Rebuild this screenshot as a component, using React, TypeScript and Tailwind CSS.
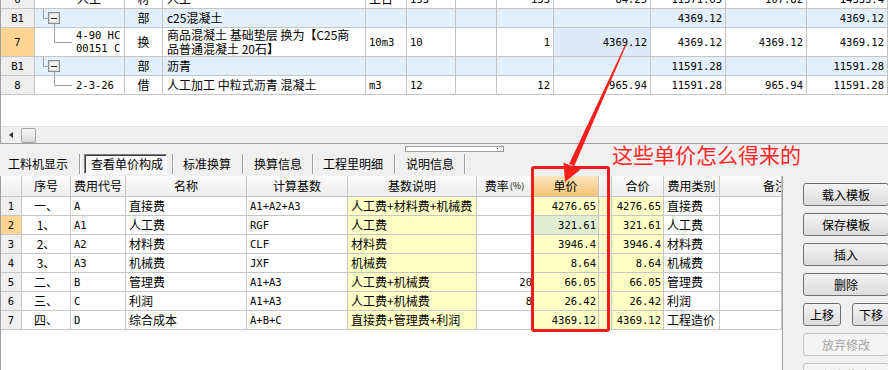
import React from 'react';

const CJK = "font-['Noto_Sans_CJK_SC','Noto_Sans',sans-serif]";
const MONO = "font-['DejaVu_Sans_Mono','Noto_Sans_CJK_SC',monospace] text-[10.5px]";

// upper grid: 定额列表
const TOP_GRID = 'grid grid-cols-[34px_90px_38px_203px_41px_49px_41px_57px_97px_75px_81px_81px]';
const TL = 'border-r border-b border-[#c4c4c4] overflow-hidden whitespace-nowrap flex items-center leading-[14px]';

// lower grid: 单价构成
const FEE_GRID = 'grid grid-cols-[21px_49px_55px_121px_101px_129px_56px_66px_13px_52px_56px_62px]';
const BL = 'border-r border-b border-[#c6c6c6] overflow-hidden whitespace-nowrap flex items-center leading-[14px]';

const FEES = [
  ['1', '一、', 'A', '直接费', 'A1+A2+A3', '人工费+材料费+机械费', '', '4276.65', '4276.65', '直接费'],
  ['2', '1、', 'A1', '人工费', 'RGF', '人工费', '', '321.61', '321.61', '人工费'],
  ['3', '2、', 'A2', '材料费', 'CLF', '材料费', '', '3946.4', '3946.4', '材料费'],
  ['4', '3、', 'A3', '机械费', 'JXF', '机械费', '', '8.64', '8.64', '机械费'],
  ['5', '二、', 'B', '管理费', 'A1+A3', '人工费+机械费', '20', '66.05', '66.05', '管理费'],
  ['6', '三、', 'C', '利润', 'A1+A3', '人工费+机械费', '8', '26.42', '26.42', '利润'],
  ['7', '四、', 'D', '综合成本', 'A+B+C', '直接费+管理费+利润', '', '4369.12', '4369.12', '工程造价'],
];

function C({ children, className = '' }: { children?: React.ReactNode; className?: string }) {
  return <div className={`${TL} ${className}`}>{children}</div>;
}

function B({ children, className = '' }: { children?: React.ReactNode; className?: string }) {
  return <div className={`${BL} ${className}`}>{children}</div>;
}

function Tree({ group, h }: { group?: boolean; h: number }) {
  const mid = Math.floor(h / 2) + 0.5;
  if (group)
    return (
      <svg width="30" height={h} className="shrink-0">
        <path d={`M8.5 0V${mid}H13`} stroke="#a0a0a0" fill="none" />
        <rect x="13.5" y="3.5" width="11" height="11" fill="#f2f2f2" stroke="#8c8c8c" />
        <rect x="14.5" y="4.5" width="9" height="9" fill="none" stroke="#d8d8d8" />
        <path d="M16 9.5h6" stroke="#222" />
        <path d={`M19.5 15V${h}`} stroke="#a0a0a0" />
      </svg>
    );
  return (
    <svg width="38" height={h} className="shrink-0">
      <path d={`M19.5 0V${mid}H37`} stroke="#a0a0a0" fill="none" />
    </svg>
  );
}

function Num({ v, className = '' }: { v: string; className?: string }) {
  return <C className={`justify-end pr-[3px] ${MONO} ${className}`}>{v}</C>;
}

function TopPanel() {
  const blue = 'bg-[#e1f0fb]';
  return (
    <div className="h-[144px] flex flex-col bg-white border-l border-b border-[#a0a0a0]">
      <div className="flex-1 overflow-hidden">
        <div className={`${TOP_GRID} h-[19px] -mt-[10px]`}>
          <C className={`justify-center bg-[#efefef] ${MONO}`}>6</C>
          <C className="pl-[42px]">人工</C>
          <C className="justify-center">材</C>
          <C className="pl-[4px]">人工</C>
          <C className="pl-[3px]">工日</C>
          <C className={`pl-[3px] ${MONO}`}>133</C>
          <C />
          <Num v="133" />
          <Num v="84.25" />
          <Num v="11371.65" />
          <Num v="107.82" />
          <Num v="14333.4" />
        </div>
        <div className={`${TOP_GRID} h-[19px] ${blue}`}>
          <C className={`justify-center bg-[#efefef] ${MONO}`}>B1</C>
          <C className="items-stretch"><Tree group h={18} /></C>
          <C className="justify-center">部</C>
          <C className="pl-[4px]">c25混凝土</C>
          <C /><C /><C /><C /><C />
          <Num v="4369.12" />
          <C />
          <Num v="4369.12" />
        </div>
        <div className={`${TOP_GRID} h-[29px]`}>
          <C className={`justify-center bg-[#ffd591] ${MONO}`}>7</C>
          <C className="items-stretch">
            <Tree h={28} />
            <div className={`ml-[3px] self-center leading-[13px] ${MONO}`}>4-90 HC<br />00151 C</div>
          </C>
          <C className="justify-center">换</C>
          <C className="pl-[4px]">
            <div className="leading-[14px]">商品混凝土 基础垫层 换为【C25商<br />品普通混凝土 20石】</div>
          </C>
          <C className={`pl-[3px] ${MONO}`}>10m3</C>
          <C className={`pl-[3px] ${MONO}`}>10</C>
          <C />
          <Num v="1" />
          <Num v="4369.12" className="bg-[#dceaf9]" />
          <Num v="4369.12" />
          <Num v="4369.12" />
          <Num v="4369.12" />
        </div>
        <div className={`${TOP_GRID} h-[19px] ${blue}`}>
          <C className={`justify-center bg-[#efefef] ${MONO}`}>B1</C>
          <C className="items-stretch"><Tree group h={18} /></C>
          <C className="justify-center">部</C>
          <C className="pl-[4px]">沥青</C>
          <C /><C /><C /><C /><C />
          <Num v="11591.28" />
          <C />
          <Num v="11591.28" />
        </div>
        <div className={`${TOP_GRID} h-[19px]`}>
          <C className={`justify-center bg-[#efefef] ${MONO}`}>8</C>
          <C className="items-stretch">
            <Tree h={18} />
            <div className={`ml-[3px] self-center ${MONO}`}>2-3-26</div>
          </C>
          <C className="justify-center">借</C>
          <C className="pl-[4px]">人工加工 中粒式沥青 混凝土</C>
          <C className={`pl-[3px] ${MONO}`}>m3</C>
          <C className={`pl-[3px] ${MONO}`}>12</C>
          <C />
          <Num v="12" />
          <Num v="965.94" />
          <Num v="11591.28" />
          <Num v="965.94" />
          <Num v="11591.28" />
        </div>
      </div>
      {/* horizontal scrollbar */}
      <div className="h-[17px] flex items-center bg-[#efefef] border-t border-[#e2e2e2]">
        <svg width="4" height="6" className="ml-[8px]">
          <polygon points="4,0 0,3 4,6" fill="#303030" />
        </svg>
        <div className="ml-[8px] w-[15px] h-[15px] border border-[#a6a6a6] rounded-[2px] bg-gradient-to-b from-[#f6f6f6] to-[#dadada]" />
      </div>
    </div>
  );
}

function Sep() {
  return <div className="w-[2px] h-[20px] border-l border-[#a0a0a0] border-r border-r-white shrink-0" />;
}

function TabBar() {
  return (
    <div className="h-[32px] flex flex-col">
      <div className="h-[8px] pt-[2px]">
        <div className="ml-[405px] w-[99px] h-[6px] border border-[#9c9c9c] bg-white relative">
          <div className="absolute right-[5px] top-[1px] w-[1px] h-[1px] bg-[#202020]" />
        </div>
      </div>
      <div className="flex items-center h-[21px] mt-[1px] text-[12px]">
        <div className="w-[79px] pl-[8px]">工料机显示</div>
        <Sep />
        <div className="w-[91px] pl-[3px]">
          <div className="w-[83px] h-[20px] pl-[6px] flex items-center bg-[#f8f8f8] border border-t-[#7c7c7c] border-l-[#7c7c7c] border-r-white border-b-white shadow-[inset_1px_1px_0_#3c3c3c]">
            查看单价构成
          </div>
        </div>
        <Sep />
        <div className="w-[68px] pl-[9px]">标准换算</div>
        <Sep />
        <div className="w-[68px] pl-[10px]">换算信息</div>
        <Sep />
        <div className="w-[80px] pl-[9px]">工程里明细</div>
        <Sep />
        <div className="w-[68px] pl-[10px]">说明信息</div>
        <Sep />
      </div>
    </div>
  );
}

function FeeTable() {
  const yellow = 'bg-[#ffffc6]';
  return (
    <div className="w-[783px] bg-white border-l border-r border-[#a0a0a0] text-[12px]">
      <div className={`${FEE_GRID} h-[21px] bg-gradient-to-b from-[#fbfbfb] to-[#ededed]`}>
        <B />
        <B className="justify-center">序号</B>
        <B className="justify-center">费用代号</B>
        <B className="justify-center">名称</B>
        <B className="justify-center">计算基数</B>
        <B className="justify-center">基数说明</B>
        <B className="justify-center">费率<span className="text-[9px] ml-[1px]">(%)</span></B>
        <B className="justify-center bg-gradient-to-b from-[#fde6bd] to-[#f2c276]">单价</B>
        <B />
        <B className="justify-center">合价</B>
        <B className="justify-center">费用类别</B>
        <B className="justify-end"><span className="mr-[-6px]">备注</span></B>
      </div>
      {FEES.map((r) => (
        <div key={r[0]} className={`${FEE_GRID} h-[19px]`}>
          <B className={`justify-center ${MONO} ${r[0] === '2' ? 'bg-[#ffd591]' : 'bg-[#efefef]'}`}>{r[0]}</B>
          <B className="justify-center">{r[1]}</B>
          <B className={`pl-[3px] ${MONO}`}>{r[2]}</B>
          <B className="pl-[3px]">{r[3]}</B>
          <B className={`pl-[3px] ${MONO}`}>{r[4]}</B>
          <B className={`pl-[3px] ${yellow}`}>{r[5]}</B>
          <B className={`justify-end ${MONO}`}>{r[6]}</B>
          <B className={`justify-end pr-[2px] ${MONO} ${r[0] === '2' ? 'bg-[#e0efd4]' : yellow}`}>{r[7]}</B>
          <B className={yellow} />
          <B className={`justify-end pr-[2px] ${MONO} ${yellow}`}>{r[8]}</B>
          <B className="pl-[3px]">{r[9]}</B>
          <B />
        </div>
      ))}
    </div>
  );
}

function Btn({ label, w = 'w-[86px]', off }: { label: string; w?: string; off?: boolean }) {
  return (
    <div
      className={`${w} h-[23px] shrink-0 flex items-center justify-center rounded-[3px] border text-[12px] ${
        off
          ? 'border-[#c4c4c4] bg-[#f4f4f4] text-[#a6a6a6]'
          : 'border-[#707070] bg-gradient-to-b from-[#f3f3f3] to-[#dcdcdc]'
      }`}
    >
      {label}
    </div>
  );
}

function SidePanel() {
  return (
    <div className="flex-1 min-w-0 overflow-hidden pl-[20px] pt-[7px] flex flex-col gap-[7px]">
      <Btn label="载入模板" />
      <Btn label="保存模板" />
      <Btn label="插入" />
      <Btn label="删除" />
      <div className="flex gap-[11px]">
        <Btn label="上移" w="w-[38px]" />
        <Btn label="下移" w="w-[38px]" />
      </div>
      <Btn label="放弃修改" off />
      <Btn label="保存修改" off />
    </div>
  );
}

function Annotation() {
  return (
    <>
      <div className="absolute left-[531px] top-[166px] w-[79px] h-[166px] border-[3px] border-[#f01c1c] rounded-[3px] pointer-events-none" />
      <div className="absolute left-[612px] top-[144px] text-[21px] leading-none text-[#ff2828] whitespace-nowrap">
        这些单价怎么得来的
      </div>
      <svg className="absolute left-0 top-0 pointer-events-none" width="888" height="370">
        <polygon points="625.5,44 626.5,44.5 574.2,166.2 569.2,163.8" fill="#f42020" />
        <polygon points="565,182 580.5,169.5 563.5,162.5" fill="#f42020" />
      </svg>
    </>
  );
}

export default function App() {
  return (
    <div className={`relative w-[888px] h-[370px] overflow-hidden bg-[#f0f0f0] text-black text-[12px] ${CJK}`}>
      <TopPanel />
      <TabBar />
      <div className="flex h-[194px]">
        <FeeTable />
        <SidePanel />
      </div>
      <Annotation />
    </div>
  );
}
